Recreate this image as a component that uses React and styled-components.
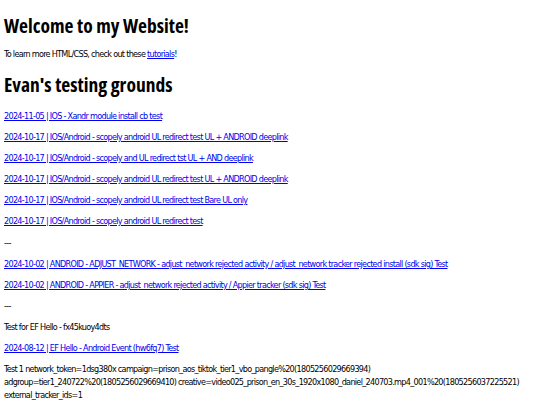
import React from 'react';
import styled, { createGlobalStyle } from 'styled-components';

const GlobalStyle = createGlobalStyle`
  html, body {
    margin: 0;
    padding: 0;
    background: #ffffff;
  }
  body {
    font-family: "DejaVu Sans", sans-serif;
    font-stretch: condensed;
    color: #000000;
  }
`

const Page = styled.div`
  padding: 0 4px;
`

const Title = styled.h1`
  font-family: "Open Sans", "DejaVu Sans", sans-serif;
  font-stretch: condensed;
  font-size: 19.5px;
  font-weight: bold;
  line-height: 24px;
  margin: ${p => p.$top}px 0 0;
`

const Para = styled.p`
  font-family: "DejaVu Sans", sans-serif;
  font-stretch: condensed;
  font-size: 9px;
  letter-spacing: -0.7px;
  line-height: 13px;
  margin: ${p => p.$top || 8}px 0 0;
  white-space: ${p => (p.$nowrap ? 'nowrap' : 'normal')};
`

const Link = styled.a`
  color: #0000ee;
  text-decoration: underline;
`

const links = [
  '2024-11-05 | IOS - Xandr module install cb test',
  '2024-10-17 | IOS/Android - scopely android UL redirect test UL + ANDROID deeplink',
  '2024-10-17 | IOS/Android - scopely and UL redirect tst UL + AND deeplink',
  '2024-10-17 | IOS/Android - scopely android UL redirect test UL + ANDROID deeplink',
  '2024-10-17 | IOS/Android - scopely android UL redirect test Bare UL only',
  '2024-10-17 | IOS/Android - scopely android UL redirect test',
]

const adjustLinks = [
  '2024-10-02 | ANDROID - ADJUST_NETWORK - adjust_network rejected activity / adjust_network tracker rejected install (sdk sig) Test',
  '2024-10-02 | ANDROID - APPIER - adjust_network rejected activity / Appier tracker (sdk sig) Test',
]

const App = () => {
  return (
    <Page>
      <GlobalStyle />
      <Title $top={14}>Welcome to my Website!</Title>
      <Para $top={10}>
        To learn more HTML/CSS, check out these <Link href="#">tutorials</Link>!
      </Para>
      <Title as="h2" $top={12}>Evan's testing grounds</Title>
      {links.map((l, i) => (
        <Para key={i} $top={i === 0 ? 13 : 8}>
          <Link href="#">{l}</Link>
        </Para>
      ))}
      <Para $top={9}>---</Para>
      {adjustLinks.map((l, i) => (
        <Para key={i}>
          <Link href="#">{l}</Link>
        </Para>
      ))}
      <Para>---</Para>
      <Para>Test for EF Hello - fx45kuoy4dts</Para>
      <Para>
        <Link href="#">2024-08-12 | EF Hello - Android Event (hw6fq7) Test</Link>
      </Para>
      <Para $nowrap>
        Test 1 network_token=1dsg380x campaign=prison_aos_tiktok_tier1_vbo_pangle%20(1805256029669394)
        <br />
        adgroup=tier1_240722%20(1805256029669410) creative=video025_prison_en_30s_1920x1080_daniel_240703.mp4_001%20(1805256037225521)
        <br />
        external_tracker_ids=1
      </Para>
    </Page>
  )
}

export default App
